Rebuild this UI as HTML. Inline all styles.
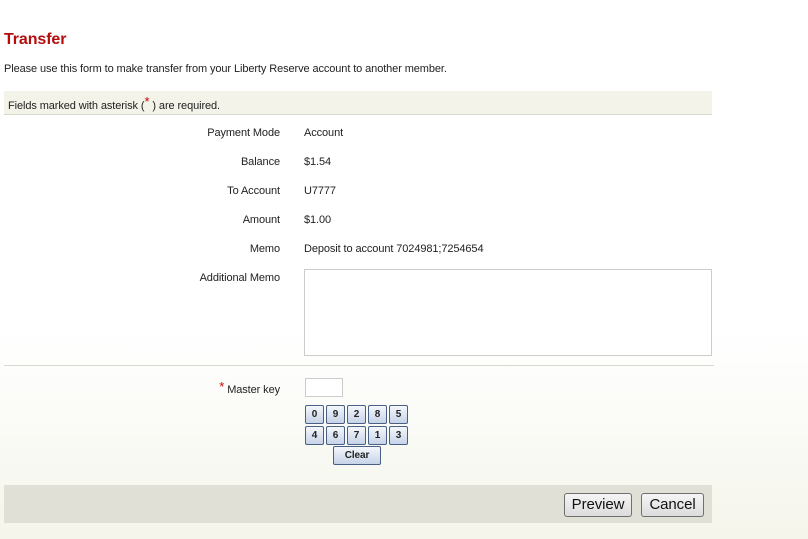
<!DOCTYPE html>
<html><head><style>
body{margin:0;width:808px;height:539px;overflow:hidden;background:linear-gradient(#fff 0,#fff 330px,#f5f5ec 539px);font-family:"Liberation Sans",Arial,sans-serif;font-size:11px;letter-spacing:-0.1px;color:#222;position:relative}
.a{position:absolute;white-space:nowrap}
.l{position:absolute;right:528px;text-align:right;white-space:nowrap}
.k{position:absolute;width:17px;height:17px;border:1px solid #4a5f86;border-radius:2px;background:linear-gradient(#f4f7fc,#c6d3e8);font-weight:bold;font-size:10px;text-align:center;line-height:17px;color:#222}
.b{position:absolute;height:22px;border:1px solid #707070;border-radius:3px;background:linear-gradient(#f5f5f5,#dcdcdc);font-size:15px;line-height:22px;text-align:center;color:#111}
</style></head><body>
<div class="a" style="left:4px;top:31px;font-size:16px;font-weight:bold;color:#b30d0d">Transfer</div>
<div class="a" style="left:4px;top:63px">Please use this form to make transfer from your Liberty Reserve account to another member.</div>
<div class="a" style="left:4px;top:91px;width:708px;height:23px;background:#f3f3e9;border-bottom:1px solid #d8d8cc"></div>
<div class="a" style="left:8px;top:97px">Fields marked with asterisk (<span style="color:#c00;font-size:13px;position:relative;top:-3px">*</span> ) are required.</div>
<div class="l" style="top:127px">Payment Mode</div><div class="a" style="left:304px;top:127px">Account</div>
<div class="l" style="top:156px">Balance</div><div class="a" style="left:304px;top:156px">$1.54</div>
<div class="l" style="top:185px">To Account</div><div class="a" style="left:304px;top:185px">U7777</div>
<div class="l" style="top:214px">Amount</div><div class="a" style="left:304px;top:214px">$1.00</div>
<div class="l" style="top:243px">Memo</div><div class="a" style="left:304px;top:243px">Deposit to account 7024981;7254654</div>
<div class="l" style="top:272px">Additional Memo</div>
<div class="a" style="left:304px;top:269px;width:406px;height:85px;border:1px solid #ccc;background:#fff"></div>
<div class="a" style="left:4px;top:365px;width:710px;height:1px;background:#d8d8cc"></div>
<div class="l" style="top:381px"><span style="color:#c00;font-size:13px;position:relative;top:-2px">*</span> Master key</div>
<div class="a" style="left:305px;top:378px;width:36px;height:17px;border:1px solid #ccc;background:#fff"></div>
<div class="k" style="left:305px;top:405px">0</div><div class="k" style="left:326px;top:405px">9</div><div class="k" style="left:347px;top:405px">2</div><div class="k" style="left:368px;top:405px">8</div><div class="k" style="left:389px;top:405px">5</div>
<div class="k" style="left:305px;top:426px">4</div><div class="k" style="left:326px;top:426px">6</div><div class="k" style="left:347px;top:426px">7</div><div class="k" style="left:368px;top:426px">1</div><div class="k" style="left:389px;top:426px">3</div>
<div class="k" style="left:333px;top:446px;width:46px">Clear</div>
<div class="a" style="left:4px;top:485px;width:708px;height:38px;background:#e0e0d6"></div>
<div class="b" style="left:564px;top:493px;width:66px">Preview</div>
<div class="b" style="left:641px;top:493px;width:61px">Cancel</div>
</body></html>
